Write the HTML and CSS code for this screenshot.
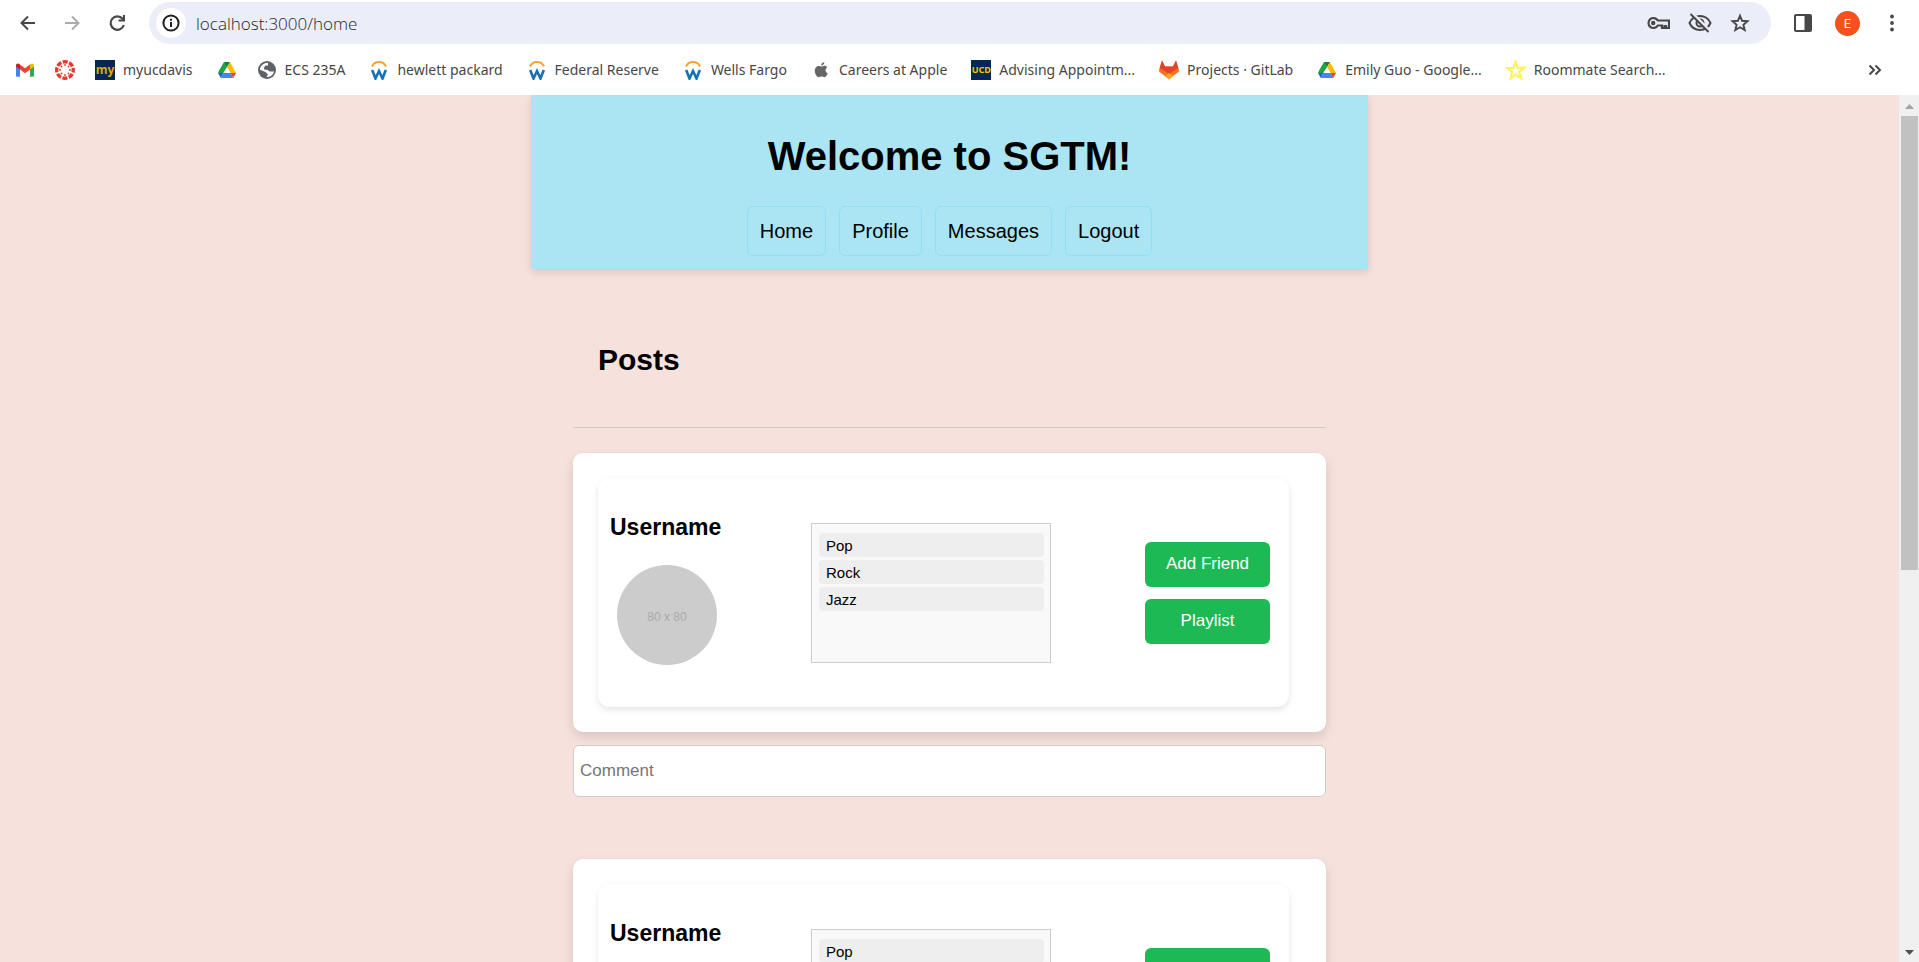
FILE: index.html
```html
<!DOCTYPE html>
<html lang="en">
<head>
<meta charset="utf-8">
<title>SGTM Home</title>
<link rel="stylesheet" href="styles.css">
</head>
<body>
<svg class="sprite" aria-hidden="true">
  <symbol id="drive" viewBox="0 0 20 20">
    <path d="M7 2 2.2 10.2 4.8 14.6 10 5.8Z" fill="#1ea446"/><path d="M7 2h6L10 7.2Z" fill="#188038"/>
    <path d="M13 2 10 7.2 13.6 13H19Z" fill="#fbbc04"/><path d="M1 13h5.4L3.8 18Z" fill="#1967d2"/>
    <path d="M2.2 10.2 1 13h5.4L8 10.2 10 7.2 7.4 5Z" fill="#1ea446"/>
    <path d="M6.4 13h7.2l2.6 5H3.8Z" fill="#4285f4"/><path d="M13.6 13H19l-2.8 5Z" fill="#ea4335"/>
    <path d="M10 7.4 13.4 13H6.6Z" fill="#fff"/>
  </symbol>
  <symbol id="workday" viewBox="0 0 20 20">
    <path d="M3 6.500C5.500.4 14.500.4 17 6.500" fill="none" stroke="#f9a52b" stroke-width="2"/>
    <path d="M3.200 10 6.500 18.500 10 11 13.500 18.500 16.800 10" fill="none" stroke="#1571b5" stroke-width="2.600"/>
  </symbol>
</svg>
<header class="browser">
  <div class="toolbar">
    <div class="history">
      <button class="tool" aria-label="Back"><svg viewBox="0 0 20 20"><path d="M18 10H5M11 3.500 4.500 10 11 16.500" fill="none" stroke="#474747" stroke-width="2"/></svg></button>
      <button class="tool" aria-label="Forward"><svg viewBox="0 0 20 20"><path d="M3 10h13M10 3.500 16.500 10 10 16.500" fill="none" stroke="#ababab" stroke-width="2"/></svg></button>
      <button class="tool" aria-label="Reload"><svg viewBox="0 0 20 20"><path d="M16.800 12A6.700 6.700 0 1 1 15.500 5.800L17 7.300" fill="none" stroke="#474747" stroke-width="2.200"/><path d="M18 2v6.500h-6.500V6.400h4.400V2Z" fill="#474747"/></svg></button>
    </div>
    <div class="omnibox">
      <button class="site-info" aria-label="Site information"><svg viewBox="0 0 20 20"><circle cx="10" cy="10" r="7.600" fill="none" stroke="#1f1f1f" stroke-width="2"/><path d="M10 9v5M10 5.700v2" stroke="#1f1f1f" stroke-width="2"/></svg></button>
      <input class="url" type="text" aria-label="Address" value="localhost:3000/home">
      <button class="tool" aria-label="Passwords"><svg class="key" viewBox="0 0 24 16"><path d="M11.800 5.500A5 5 0 1 0 11.800 10.500H16V13H18.500V11H20V13H23V5.500Z" fill="none" stroke="#474747" stroke-width="2.200"/><circle cx="7.200" cy="8" r="2.200" fill="#474747"/></svg></button>
      <button class="tool" aria-label="Third-party cookies blocked"><svg class="eye" viewBox="0 0 24 22"><path d="M1.500 11C3.500 6.500 7.500 4 12 4s8.500 2.500 10.500 7C20.500 15.500 16.500 18 12 18S3.500 15.500 1.500 11Z" fill="none" stroke="#474747" stroke-width="2"/><circle cx="12" cy="11" r="3.500" fill="none" stroke="#474747" stroke-width="2"/><path d="M4.500 1.500 22 19" stroke="#ebeef8" stroke-width="3"/><path d="M2.500 2 20.500 20" stroke="#474747" stroke-width="2"/></svg></button>
      <button class="tool" aria-label="Bookmark this tab"><svg viewBox="0 0 20 20"><path d="m10 2.800 2.100 5 5.400.5-4.100 3.500 1.300 5.300-4.700-2.800-4.700 2.800 1.300-5.300L2.500 8.300l5.400-.5Z" fill="none" stroke="#474747" stroke-width="1.900"/></svg></button>
    </div>
    <button class="tool" aria-label="Side panel"><svg viewBox="0 0 20 20"><rect x="2" y="2" width="16" height="16" rx="1" fill="none" stroke="#474747" stroke-width="2"/><path d="M11.500 2H18v16h-6.500Z" fill="#474747"/></svg></button>
    <button class="avatar-btn" aria-label="Account">E</button>
    <button class="tool" aria-label="Menu"><svg viewBox="0 0 20 20"><g fill="#474747"><circle cx="10" cy="3.500" r="1.900"/><circle cx="10" cy="10" r="1.900"/><circle cx="10" cy="16.500" r="1.900"/></g></svg></button>
  </div>
  <nav class="bookmarks" aria-label="Bookmarks">
    <a href="#" aria-label="Gmail"><svg viewBox="0 0 20 20"><path d="M1 5v10.500a1.200 1.200 0 0 0 1.200 1.200H5V8Z" fill="#4285f4"/><path d="M15 8v8.700h2.800a1.200 1.200 0 0 0 1.200-1.200V5Z" fill="#34a853"/><path d="M5 4.500v5l5 3.700 5-3.700v-5L10 8.300Z" fill="#ea4335"/><path d="M1 5.500v1L5 9.500v-5C3 2.600 1 3.600 1 5.500Z" fill="#c5221f"/><path d="M19 5.500v1l-4 3v-5c2-1.900 4-.9 4 1Z" fill="#fbbc04"/></svg></a>
    <a href="#" aria-label="Canvas"><svg viewBox="0 0 20 20"><circle cx="10" cy="10" r="8.300" fill="none" stroke="#e23b2e" stroke-width="3.400" stroke-dasharray="5 1.519" stroke-dashoffset="2.500"/><g fill="#e23b2e"><circle cx="10" cy="5" r=".9"/><circle cx="10" cy="15" r=".9"/><circle cx="5" cy="10" r=".9"/><circle cx="15" cy="10" r=".9"/><circle cx="6.500" cy="6.500" r=".9"/><circle cx="13.500" cy="6.500" r=".9"/><circle cx="6.500" cy="13.500" r=".9"/><circle cx="13.500" cy="13.500" r=".9"/></g></svg></a>
    <a class="named" href="#"><span class="tile tile-my">my</span>myucdavis</a>
    <a href="#" aria-label="Drive"><svg><use href="#drive"/></svg></a>
    <a class="named" href="#"><svg viewBox="0 0 20 20"><circle cx="10" cy="10" r="9" fill="#5f6368"/><path d="M3 8.500C4 5 7 3 11 3v2.500H8.500L7 7.500v2h4l1.500 2h4.500C16.300 15 13 17.300 9.500 17L11 14.500 8.500 12 3 9.800Z" fill="#fff"/><path d="M9 9.500V8l3-1.500 2 3-1 1.500Z" fill="#5f6368"/></svg>ECS 235A</a>
    <a class="named" href="#"><svg><use href="#workday"/></svg>hewlett packard</a>
    <a class="named" href="#"><svg><use href="#workday"/></svg>Federal Reserve</a>
    <a class="named" href="#"><svg><use href="#workday"/></svg>Wells Fargo</a>
    <a class="named" href="#"><svg viewBox="0 0 20 20"><path d="M13.300 2c.2 1.800-1.300 3.600-3 3.600C10 3.900 11.500 2.200 13.300 2ZM10.500 6.600c.8 0 1.500-.8 3-.8 1.200 0 2.200.6 2.800 1.500-2.500 1.500-2.200 4.800.4 5.900-.6 1.700-1.900 4-3.300 4-1.100 0-1.400-.7-2.800-.7s-1.800.7-2.800.7C5.500 17.200 2 10.800 4.800 7.400c1-1.200 2.100-1.500 3-1.500 1.200 0 2 .7 2.700.7Z" fill="#666"/></svg>Careers at Apple</a>
    <a class="named" href="#"><span class="tile tile-ucd">UCD</span>Advising Appointm...</a>
    <a class="named" href="#"><svg viewBox="0 0 20 20"><path d="M10 19 .6 12Q-.2 11.300.1 10L3 .5 6 6.500h8L17 .5 19.900 10q.3 1.300-.5 2Z" fill="#fc6d26"/><path d="M3 .5.500 8.500Q3 8.500 5.500 11L10 14l4.500-3q2.500-2.500 5-2.500L17 .5 14 6.500H6Z" fill="#e24329"/><path d="m10 13 4.500 3L10 19.500 5.500 16Z" fill="#fca326"/></svg>Projects · GitLab</a>
    <a class="named" href="#"><svg><use href="#drive"/></svg>Emily Guo - Google...</a>
    <a class="named" href="#"><svg viewBox="0 0 20 20"><path d="m9.500 1.500 2 6.500 7.500-.5-6 4.500 2.500 6.500-6-4-5 4 1.500-6.500L1 8h6.500Z" fill="none" stroke="#fff25a" stroke-width="2.200"/></svg>Roommate Search...</a>
    <button class="tool more" aria-label="More bookmarks"><svg viewBox="0 0 20 20"><path d="m4.500 5.500 4.500 4.500-4.500 4.500M10.500 5.500 15 10l-4.500 4.500" fill="none" stroke="#474747" stroke-width="2"/></svg></button>
  </nav>
</header>
<div class="viewport">
  <div class="page">
    <header class="site-header">
      <h1>Welcome to SGTM!</h1>
      <nav class="site-nav">
        <a href="#">Home</a><a href="#">Profile</a><a href="#">Messages</a><a href="#">Logout</a>
      </nav>
    </header>
    <main class="feed">
      <h2>Posts</h2>
      <article class="post">
        <div class="card"><div class="user-card">
          <div class="profile"><h3>Username</h3><div class="photo">80 x 80</div></div>
          <ul class="genres"><li>Pop</li><li>Rock</li><li>Jazz</li></ul>
          <div class="actions"><button>Add Friend</button><button>Playlist</button></div>
        </div></div>
        <input class="comment" type="text" placeholder="Comment" aria-label="Comment">
      </article>
      <article class="post">
        <div class="card"><div class="user-card">
          <div class="profile"><h3>Username</h3><div class="photo">80 x 80</div></div>
          <ul class="genres"><li>Pop</li><li>Rock</li><li>Jazz</li></ul>
          <div class="actions"><button>Add Friend</button><button>Playlist</button></div>
        </div></div>
        <input class="comment" type="text" placeholder="Comment" aria-label="Comment">
      </article>
    </main>
  </div>
  <div class="scrollbar" aria-hidden="true">
    <svg class="arrow" viewBox="0 0 20 20"><path d="M6 14h9l-4.500-5Z" fill="#a3a3a3"/></svg>
    <div class="track"><div class="thumb"></div></div>
    <svg class="arrow" viewBox="0 0 20 20"><path d="M6 8h9l-4.500 5Z" fill="#505050"/></svg>
  </div>
</div>
</body>
</html>
```
FILE: styles.css
```css
* { box-sizing: border-box; }
body {
  margin: 0;
  height: 100vh;
  display: flex;
  flex-direction: column;
  overflow: hidden;
  font-family: "Liberation Sans", Arial, sans-serif;
  color: #000;
}
button { border: 0; background: none; padding: 0; font-family: inherit; cursor: pointer; }
a { color: inherit; text-decoration: none; }
h1, h2, h3 { margin: 0; }
.sprite { position: absolute; width: 0; height: 0; }

/* Browser frame */
.browser { flex: none; background: #fff; font-family: "Noto Sans", "Open Sans", sans-serif; color: #474747; }
.browser svg { width: 20px; height: 20px; flex: none; display: block; }
.browser svg.key { width: 24px; height: 16px; }
.browser svg.eye { width: 24px; height: 22px; }
.toolbar { display: flex; align-items: center; padding: 2px 17px 0; gap: 22px; }
.history { display: flex; gap: 25px; }
.tool { flex: none; display: flex; justify-content: center; align-items: center; }
.omnibox {
  flex: 1;
  min-width: 0;
  display: flex;
  align-items: center;
  gap: 18px;
  height: 42px;
  padding: 0 21px 0 7px;
  border-radius: 21px;
  background: #ebeef8;
}
.site-info { width: 30px; height: 30px; border-radius: 50%; background: #fff; display: flex; align-items: center; justify-content: center; }
.url { flex: 1; min-width: 0; border: 0; padding: 0; margin-left: -8px; background: none; outline: 0; font: 300 17px "Open Sans", "Noto Sans", sans-serif; color: #1f1f1f; }
.avatar-btn { width: 25px; height: 25px; border-radius: 50%; background: #f4511e; color: #fff; font-family: Roboto, sans-serif; font-size: 13px; }
.bookmarks { display: flex; align-items: center; gap: 20px; height: 51px; padding: 0 34px 0 15px; font-size: 14px; white-space: nowrap; }
.bookmarks a { display: flex; align-items: center; gap: 8px; }
.bookmarks .named { padding-right: 4px; }
.more { margin-left: auto; }
.tile { width: 20px; height: 20px; display: flex; align-items: center; justify-content: center; background: #022851; font-weight: 700; line-height: 1; }
.tile-my { color: #daaa00; font-size: 12px; }
.tile-ucd { color: #ffbf00; font-size: 9px; }

/* Page area */
.viewport { flex: 1; min-height: 0; display: flex; }
.page { flex: 1; min-width: 0; overflow: hidden auto; scrollbar-width: none; background: #f6e1dc; }
.site-header {
  max-width: 837px;
  margin: 0 auto;
  padding: 38px 12px 13px;
  background: #abe4f3;
  box-shadow: 0 3px 8px rgba(0, 0, 0, .12);
  text-align: center;
}
h1 { font-size: 40px; line-height: 46px; }
.site-nav { display: flex; justify-content: center; gap: 13px; margin-top: 27px; }
.site-nav a { padding: 12px; border: 1px solid #8ce0f7; border-radius: 6px; font-size: 20px; line-height: 24px; }
.feed { max-width: 753px; margin: 0 auto; }
h2 { padding: 74px 25px 50px; margin-bottom: 25px; border-bottom: 1px solid #ccc; font-size: 30px; line-height: 34px; }
.post { margin-bottom: 62px; }
.card { padding: 25px 37px 25px 25px; border-radius: 10px; background: #fff; box-shadow: 0 5px 12px rgba(0, 0, 0, .12); }
.user-card {
  display: flex;
  justify-content: space-between;
  align-items: center;
  height: 229px;
  padding: 0 19px 0 12px;
  border-radius: 12px;
  background: #fff;
  box-shadow: 0 3px 6px rgba(0, 0, 0, .1);
}
.profile { width: 107px; padding-bottom: 6px; }
h3 { font-size: 23px; line-height: 26px; margin-bottom: 25px; }
.photo { width: 100px; height: 100px; margin-left: 7px; border-radius: 50%; background: #ccc; color: #aaa; font-size: 12px; line-height: 104px; text-align: center; }
.genres { width: 240px; height: 140px; margin: 0; padding: 9px 6px 9px 7px; border: 1px solid #ccc; background: #f9f9f9; list-style: none; font-size: 15px; }
.genres li { height: 24px; margin-bottom: 3px; padding: 0 7px; border-radius: 4px; background: #eee; line-height: 25px; }
.actions { display: flex; flex-direction: column; gap: 12px; }
.actions button { width: 125px; height: 45px; border-radius: 6px; background: #1db954; color: #fff; font-size: 17px; }
.comment { display: block; width: 100%; height: 52px; margin-top: 13px; padding: 0 6px; border: 1px solid #ccc; border-radius: 6px; background: #fff; font: 17px "Liberation Sans", Arial, sans-serif; }
.comment::placeholder { color: #757575; }

.scrollbar { flex: none; width: 20px; display: flex; flex-direction: column; background: #f0f0f0; }
.arrow { width: 20px; height: 20px; display: block; }
.track { flex: 1; padding: 1px 1px 0 2px; }
.thumb { height: 55%; background: #c1c1c1; }
```
